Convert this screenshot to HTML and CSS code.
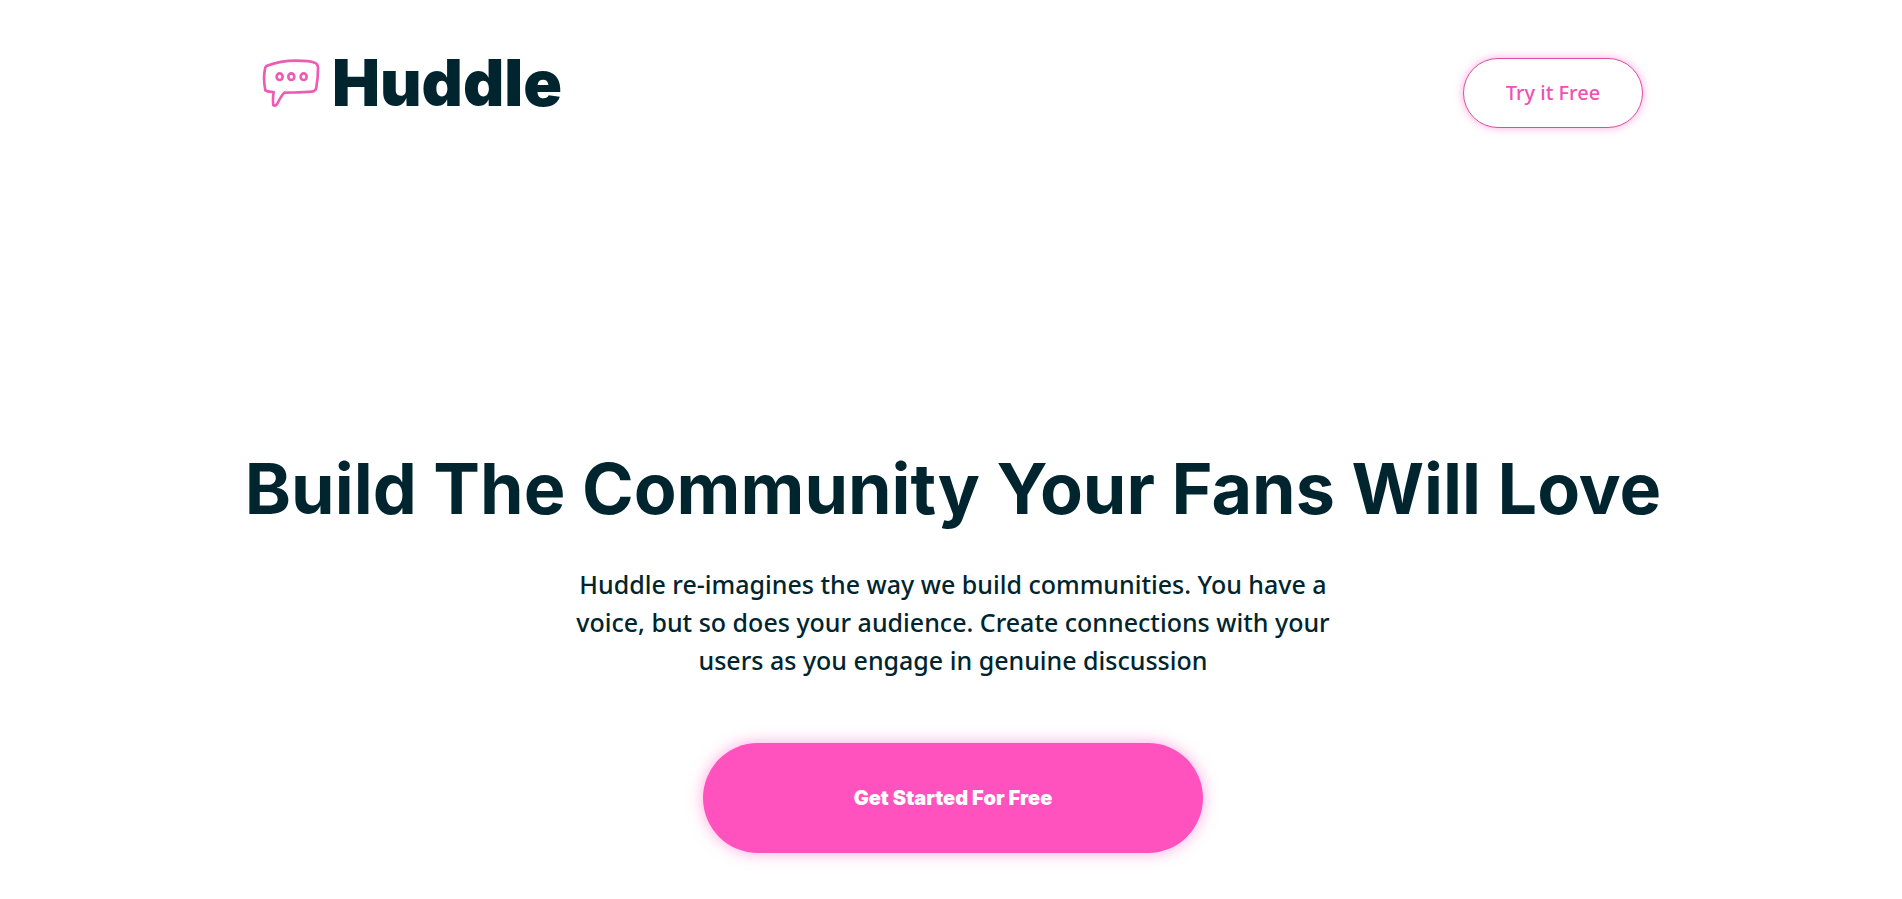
FILE: index.html
```html
<!DOCTYPE html>
<html lang="en">
<head>
<meta charset="utf-8">
<meta name="viewport" content="width=device-width, initial-scale=1">
<title>Huddle</title>
<link rel="stylesheet" href="styles.css">
</head>
<body>
<header class="header">
  <div class="logo">
    <svg class="logo-icon" viewBox="0 0 174 150" aria-hidden="true">
      <path d="M13 24C45 12 72 8 102 8C125 8 145 9 158 14C167 17 169 23 168 34C168 55 166 71 163 88C162 97 158 100 149 101C120 104 96 103 67 104C61 110 54 121 47 135C44 142 40 144 34 142C32 129 33 115 35 102C26 101 17 102 10 97C6 78 6 48 9 32C10 28 10 26 13 24Z"/>
      <ellipse cx="53" cy="56" rx="9" ry="10"/>
      <ellipse cx="88" cy="56" rx="9" ry="10"/>
      <ellipse cx="125" cy="56" rx="9" ry="10"/>
    </svg>
    <span class="logo-name">Huddle</span>
  </div>
  <button class="button button-outline" type="button">Try it Free</button>
</header>
<main class="hero">
  <h1 class="hero-title">Build The Community Your Fans Will Love</h1>
  <p class="hero-text">Huddle re-imagines the way we build communities. You have a voice, but so does your audience. Create connections with your users as you engage in genuine discussion</p>
  <button class="button button-primary" type="button">Get Started For Free</button>
</main>
</body>
</html>
```
FILE: styles.css
```css
* { box-sizing: border-box; }
body {
  margin: 0;
  background: #fff;
  color: #00252e;
  font-family: "Noto Sans", "Open Sans", sans-serif;
}
.header {
  display: flex;
  justify-content: space-between;
  align-items: flex-start;
  max-width: 1384px;
  margin: 0 auto;
  padding: 58px 0 0 3px;
}
.logo {
  display: flex;
  align-items: flex-start;
  gap: 12px;
}
.logo-icon {
  width: 58px;
  height: 50px;
  fill: none;
  stroke: #ee5bb5;
  stroke-width: 8;
  stroke-linejoin: round;
}
.logo-name {
  font: 900 64px/50px Inter, sans-serif;
}
.button {
  border-radius: 60px;
  cursor: pointer;
}
.button-outline {
  width: 180px;
  height: 70px;
  padding-bottom: 3px;
  border: 1px solid #d94fa3;
  background: #fff;
  color: #f04fb4;
  font: 500 20px "Noto Sans", "Open Sans", sans-serif;
  box-shadow: 0 0 8px #ff52bf80;
}
.hero {
  display: flex;
  flex-direction: column;
  align-items: center;
  padding: 311px 0 40px 4px;
  text-align: center;
}
.hero-title {
  margin: 0;
  font: 700 70px/100px Inter, sans-serif;
}
.hero-text {
  max-width: 780px;
  margin: 26px 0 64px;
  font-size: 25px;
  font-weight: 500;
  line-height: 38px;
}
.button-primary {
  width: 500px;
  max-width: 100%;
  height: 110px;
  border: 0;
  background: #ff52bf;
  color: #fff;
  font: 900 20px Inter, sans-serif;
  box-shadow: 0 0 15px #ff52bf80;
}
```
